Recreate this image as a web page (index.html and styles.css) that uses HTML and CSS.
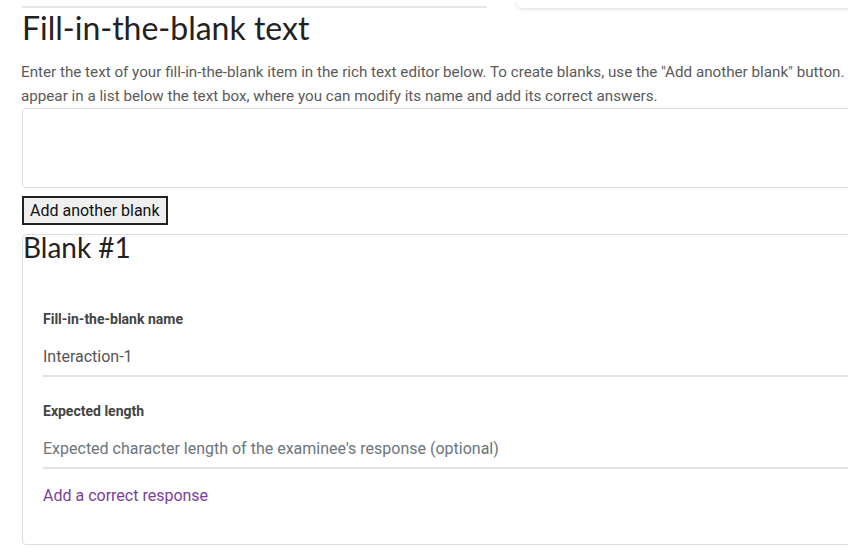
FILE: index.html
```html
<!DOCTYPE html>
<html lang="en">

<head>
    <meta charset="UTF-8">
    <meta name="viewport" content="width=device-width,initial-scale=1" />
    <title>Fill-in-the-blank item</title>
    <link rel="stylesheet" href="styles.css">
</head>

<body>
    <div class="top-strip">
        <div class="rule"></div>
        <div class="top-card"></div>
    </div>

    <main class="editor-page">
        <h1>Fill-in-the-blank text</h1>
        <p class="help">Enter the text of your fill-in-the-blank item in the rich text editor below. To create blanks, use the "Add another blank" button. Each blank will appear in a list below the text box, where you can modify its name and add its correct answers.</p>

        <div class="rich-text" contenteditable="true"></div>

        <button class="add-blank" type="button">Add another blank</button>

        <section class="blank">
            <h2>Blank #1</h2>

            <div class="field">
                <label for="blank-name">Fill-in-the-blank name</label>
                <input id="blank-name" type="text" value="Interaction-1" />
            </div>

            <div class="field">
                <label for="expected-length">Expected length</label>
                <input id="expected-length" type="text" placeholder="Expected character length of the examinee's response (optional)" />
            </div>

            <a class="add-response" href="#">Add a correct response</a>
        </section>
    </main>
</body>

</html>
```

FILE: styles.css
```css
body {
    margin: 0;
    overflow: hidden;
    font-family: Roboto, "Liberation Sans", sans-serif;
    color: #555;
}

.top-strip {
    display: flex;
    align-items: flex-start;
    padding-left: 22px;
    height: 8px;
}

.rule {
    flex-shrink: 0;
    width: 465px;
    height: 2px;
    margin-top: 6px;
    background: #e6e6e6;
}

.top-card {
    flex-shrink: 0;
    margin-left: 30px;
    width: 600px;
    height: 8px;
    background: #fff;
    border-radius: 0 0 0 5px;
    box-shadow: 0 1px 4px rgba(0, 0, 0, 0.15);
}

.editor-page {
    width: 965px;
    padding-left: 22px;
}

h1 {
    font-family: Lato, "Noto Sans", sans-serif;
    font-weight: 400;
    font-size: 32px;
    color: #222;
    margin: 4px 0 0;
    line-height: 32px;
}

.help {
    font-size: 15.2px;
    line-height: 24px;
    margin: 16px 0 0 -1px;
    color: #5a5a5a;
}

.rich-text {
    height: 78px;
    border: 1px solid #ddd;
    border-radius: 4px;
}

.add-blank {
    display: block;
    margin-top: 8px;
    font-family: Roboto, sans-serif;
    font-size: 16px;
    line-height: 19px;
    color: #111;
    background: #efefef;
    border: 2px solid #222;
    padding: 3px 6px;
    border-radius: 0;
}

.blank {
    margin-top: 9px;
    border: 1px solid #ddd;
    border-radius: 4px;
    padding: 0 0 39px 20px;
}

.blank h2 {
    font-family: Lato, "Noto Sans", sans-serif;
    font-weight: 400;
    font-size: 28px;
    color: #222;
    margin: 0 0 0 -20px;
    line-height: 24px;
}

.field {
    display: flex;
    flex-direction: column;
    margin-top: 50px;
}

.field + .field {
    margin-top: 24px;
}

.field label {
    font-size: 14px;
    line-height: 20px;
    font-weight: 700;
    color: #444;
}

.field input {
    font-family: Roboto, sans-serif;
    font-size: 16px;
    line-height: 19px;
    color: #555;
    border: 0;
    border-bottom: 2px solid #e2e2e2;
    padding: 18px 0 9px;
    outline: none;
}

.field input::placeholder {
    color: #6c757d;
}

.add-response {
    display: inline-block;
    margin-top: 17px;
    font-size: 16px;
    line-height: 19px;
    color: #7a3e9d;
    text-decoration: none;
}
```
